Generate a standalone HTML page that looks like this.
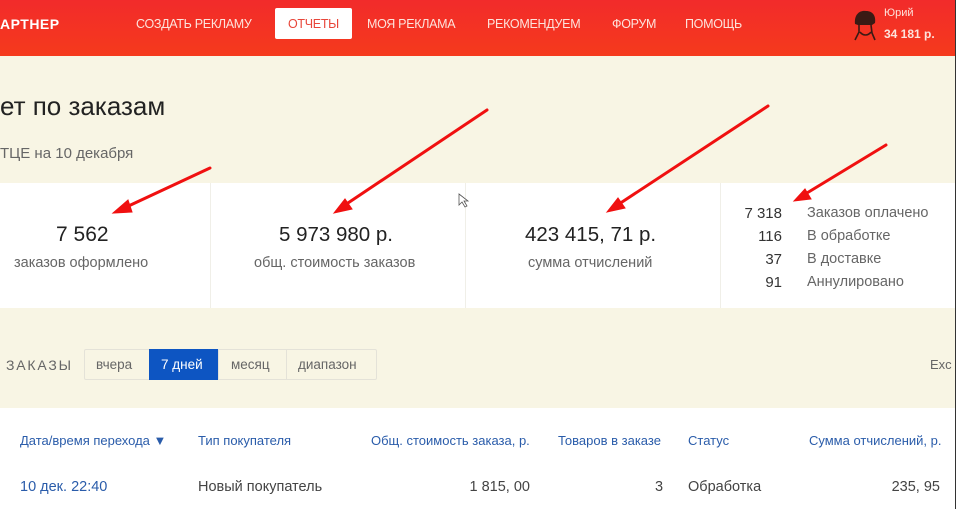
<!DOCTYPE html>
<html><head><meta charset="utf-8"><style>
*{margin:0;padding:0;box-sizing:border-box}
body{width:958px;height:509px;overflow:hidden;background:#fff;font-family:"Liberation Sans",sans-serif;position:relative}
.a{position:absolute;white-space:nowrap}
.hdr{left:0;top:0;width:955px;height:56px;background:linear-gradient(#f22b2b,#f53a1c)}
.nav{color:#fde3dc;font-size:12.5px;top:17px;letter-spacing:-0.3px}
.beige{background:#f8f5e4}
.g{color:#666}
.b{color:#2a5caa}
</style></head><body>
<div class="a hdr"></div>
<div class="a" style="left:0;top:16px;color:#fff;font-size:14px;font-weight:bold;letter-spacing:0.5px">АРТНЕР</div>
<div class="a nav" style="left:136px">СОЗДАТЬ РЕКЛАМУ</div>
<div class="a" style="left:275px;top:8px;width:77px;height:31px;background:#fff;border-radius:2px"></div>
<div class="a nav" style="left:288px;color:#e8463a">ОТЧЕТЫ</div>
<div class="a nav" style="left:367px">МОЯ РЕКЛАМА</div>
<div class="a nav" style="left:487px">РЕКОМЕНДУЕМ</div>
<div class="a nav" style="left:612px">ФОРУМ</div>
<div class="a nav" style="left:685px">ПОМОЩЬ</div>
<svg class="a" style="left:852px;top:8px" width="26" height="34" viewBox="0 0 26 34"><path d="M3 16 C2 6 8 2 14 3 C21 3 24 8 23 15 L20 17 L6 17Z" fill="#3a1a14"/><path d="M7 17 L7 24 L3 32 M19 17 L20 25 L23 32 M8 24 C11 28 16 28 19 24" stroke="#3a1a14" stroke-width="1.6" fill="none"/></svg>
<div class="a" style="left:884px;top:7px;color:#fde3dc;font-size:11px">Юрий</div>
<div class="a" style="left:884px;top:27px;color:#fde3dc;font-size:12px;font-weight:bold">34 181 р.</div>
<div class="a" style="left:955px;top:0;width:3px;height:509px;background:#fff;border-left:1px solid #333"></div>

<div class="a beige" style="left:0;top:56px;width:955px;height:127px"></div>
<div class="a" style="left:0;top:91px;font-size:26px;color:#222">ет по заказам</div>
<div class="a" style="left:0;top:145px;font-size:15px;color:#666">ТЦЕ на 10 декабря</div>

<div class="a" style="left:0;top:183px;width:955px;height:125px;background:#fff"></div>
<div class="a" style="left:210px;top:183px;width:1px;height:125px;background:#f0efe8"></div>
<div class="a" style="left:465px;top:183px;width:1px;height:125px;background:#f0efe8"></div>
<div class="a" style="left:720px;top:183px;width:1px;height:125px;background:#f0efe8"></div>

<div class="a" style="left:56px;top:223px;font-size:21px;color:#222">7 562</div>
<div class="a g" style="left:14px;top:255px;font-size:14.5px">заказов оформлено</div>
<div class="a" style="left:279px;top:223px;font-size:20.5px;color:#222">5 973 980 р.</div>
<div class="a g" style="left:254px;top:255px;font-size:14.5px">общ. стоимость заказов</div>
<div class="a" style="left:525px;top:223px;font-size:20.5px;color:#222">423 415, 71 р.</div>
<div class="a g" style="left:528px;top:255px;font-size:14.5px">сумма отчислений</div>

<div class="a" style="left:720px;top:202px;width:62px;text-align:right;font-size:15px;color:#333;line-height:23px">7 318<br>116<br>37<br>91</div>
<div class="a g" style="left:807px;top:202px;font-size:14.5px;line-height:23px">Заказов оплачено<br>В обработке<br>В доставке<br>Аннулировано</div>

<div class="a beige" style="left:0;top:308px;width:955px;height:100px"></div>
<div class="a g" style="left:6px;top:357px;font-size:14px;letter-spacing:1.8px">ЗАКАЗЫ</div>
<div class="a" style="left:84px;top:349px;width:293px;height:31px;border:1px solid #e4e2d8;background:#f8f5e4;border-radius:2px"></div>
<div class="a" style="left:149px;top:349px;width:70px;height:31px;background:#0d55c2"></div>
<div class="a" style="left:218px;top:349px;width:1px;height:31px;background:#e4e2d8"></div>
<div class="a" style="left:286px;top:349px;width:1px;height:31px;background:#e4e2d8"></div>
<div class="a g" style="left:96px;top:357px;font-size:13.5px">вчера</div>
<div class="a" style="left:161px;top:357px;font-size:13.5px;color:#fff">7 дней</div>
<div class="a g" style="left:231px;top:357px;font-size:13.5px">месяц</div>
<div class="a g" style="left:298px;top:357px;font-size:13.5px">диапазон</div>
<div class="a g" style="left:930px;top:357px;font-size:13px">Exc</div>

<div class="a b" style="left:20px;top:433px;font-size:13px">Дата/время перехода ▼</div>
<div class="a b" style="left:198px;top:433px;font-size:13px">Тип покупателя</div>
<div class="a b" style="left:371px;top:433px;font-size:13px">Общ. стоимость заказа, р.</div>
<div class="a b" style="left:558px;top:433px;font-size:13px">Товаров в заказе</div>
<div class="a b" style="left:688px;top:433px;font-size:13px">Статус</div>
<div class="a b" style="left:809px;top:433px;font-size:13px">Сумма отчислений, р.</div>

<div class="a b" style="left:20px;top:479px;font-size:14.5px">10 дек. 22:40</div>
<div class="a" style="left:198px;top:479px;font-size:14.5px;color:#444">Новый покупатель</div>
<div class="a" style="left:530px;top:479px;font-size:14.5px;color:#444;transform:translateX(-100%)">1 815, 00</div>
<div class="a" style="left:655px;top:479px;font-size:14.5px;color:#444">3</div>
<div class="a" style="left:688px;top:479px;font-size:14.5px;color:#444">Обработка</div>
<div class="a" style="left:940px;top:479px;font-size:14.5px;color:#444;transform:translateX(-100%)">235, 95</div>

<svg class="a" style="left:0;top:0" width="958" height="509">
<g stroke="#f01010" stroke-width="3" fill="#f01010" stroke-linecap="round">
<line x1="210" y1="168" x2="122" y2="209"/><polygon points="113,213 128,200 132,212" stroke-width="1"/>
<line x1="487" y1="110" x2="342" y2="207"/><polygon points="334,213 345,199 352,209" stroke-width="1"/>
<line x1="768" y1="106" x2="616" y2="206"/><polygon points="607,212 618,198 625,208" stroke-width="1"/>
<line x1="886" y1="145" x2="802" y2="196"/><polygon points="794,201 805,189 811,199" stroke-width="1"/>
</g>
<path d="M459 194 L459 205 L462 202 L465 207 L467 206 L464 201 L468 201Z" fill="#fff" stroke="#555" stroke-width="0.8"/>
</svg>
</body></html>
